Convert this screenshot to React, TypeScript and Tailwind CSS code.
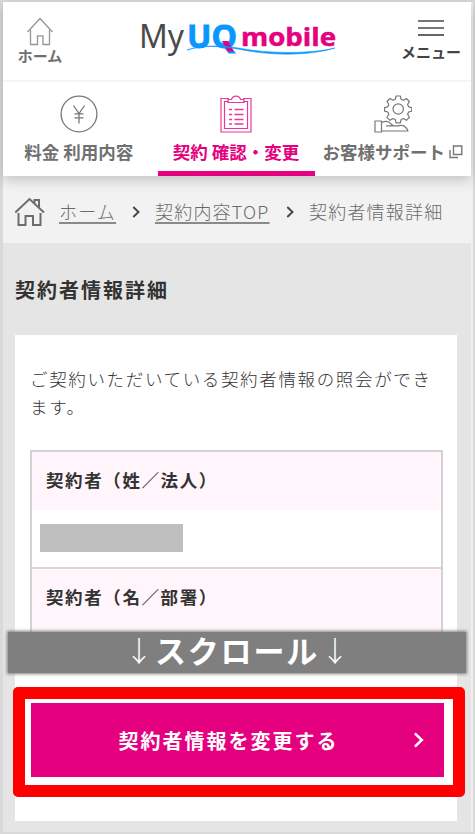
import React from "react";

function HomeIcon() {
  return (
    <svg width="28" height="29" viewBox="0 0 28 29" fill="none" stroke="#969696" strokeWidth="1.3">
      <path d="M1.5 15 L14 1.5 L26.500 15" />
      <path d="M4.500 12.500 V27.500 H11.500 V18.800 H17 V27.500 H23.500 V12.500" />
    </svg>
  );
}

function Logo() {
  return (
    <svg width="200" height="60" viewBox="0 -12 200 60" className="block">
      <text x="-1" y="29" fontFamily="'Noto Sans', sans-serif" fontSize="32" fill="#4a4a4a" textLength="45" lengthAdjust="spacingAndGlyphs">My</text>
      <text x="47" y="28.5" fontFamily="'Noto Sans', sans-serif" fontWeight="700" fontSize="32" fill="#0a96ff" stroke="#0a96ff" strokeWidth=".8" textLength="50" lengthAdjust="spacingAndGlyphs">UQ</text>
      <path d="M82 22 H88 L94 32.500 H88 Z" fill="#e4007f" />
      <path d="M47 31 C62 26 80 27 98 30 C130 37 170 37 195 29 C170 35 130 35 98 29 C80 26 62 26 47 31 Z" fill="#0a96ff" stroke="#0a96ff" strokeWidth=".6" />
      <text x="101" y="27" fontFamily="'Open Sans', sans-serif" fontWeight="700" fontSize="25" fill="#e4007f" stroke="#e4007f" strokeWidth=".5" textLength="95" lengthAdjust="spacingAndGlyphs">mobile</text>
    </svg>
  );
}

function YenIcon() {
  return (
    <svg width="38" height="38" viewBox="0 0 38 38" fill="none" stroke="#777" strokeWidth="1.3">
      <circle cx="19" cy="19" r="17.900" />
      <path d="M13.500 10.500 L19 18.500 L24.500 10.500 M19 18.500 V28.500 M14.500 18.800 H23.500 M14.500 22.800 H23.500" />
    </svg>
  );
}

function ClipboardIcon() {
  return (
    <svg width="32" height="38" viewBox="0 0 32 38" fill="none" stroke="#e83a9a" strokeWidth="1.2">
      <path d="M9 3.500 H1 V37 H31 V3.500 H23" />
      <path d="M9 6.500 H4.500 V33.500 H27.500 V6.500 H23" />
      <path d="M8 7.500 V4.500 H11.500 C12.500 0 19.500 0 20.500 4.500 H24 V7.500 Z" />
      <path d="M9 14.500 h3 M14.500 14.500 h9 M9 19.500 h3 M14.500 19.500 h9 M9 24.500 h3 M14.500 24.500 h9 M9 29 h3 M14.500 29 h9" strokeWidth="1.300" />
    </svg>
  );
}

function SupportIcon() {
  return (
    <svg width="38" height="38" viewBox="0 0 38 38" fill="none" stroke="#777" strokeWidth="1.200" strokeLinejoin="round">
      <path d="M22.100 1 h4.200 l.8 3.300 2.300 1 3-1.800 3 3-1.800 3 1 2.300 3.200.8 v3.600 l-3.200.8-1 2.300 1.800 3-3 3-3-1.800-2.300 1-.8 3.300 h-4.200 l-.8-3.300-2.300-1-3 1.800-3-3 1.800-3-1-2.300-3.200-.8 v-3.600 l3.200-.8 1-2.300-1.800-3 3-3 3 1.800 2.300-1 Z" />
      <circle cx="24.200" cy="14" r="5.200" />
      <path d="M1 26 H7.500 V37 H1 Z M7.500 27.500 C12 25.500 15 26 17 29 L19 30.500 M12 30.800 H24 C29 29.500 32 31 34 36 H7.500" />
    </svg>
  );
}

function ExternalIcon() {
  return (
    <svg width="14" height="14" viewBox="0 0 14 14" fill="none" stroke="#777" strokeWidth="1.400">
      <path d="M4.500 1 H12.800 V9.500 H4.500 Z M1 5 V12.500 H9" />
    </svg>
  );
}

function BreadcrumbHome() {
  return (
    <svg width="32" height="30" viewBox="0 0 32 30" fill="none" stroke="#6c6c6c" strokeWidth="2">
      <path d="M1.300 15.500 L15.500 2 L30 15.500 M20.500 6.500 V3 H25 V10.500" />
      <path d="M4.500 16 V28 H11.500 V19 H19 V28 H26.500 V16" />
    </svg>
  );
}

function Chevron({ className }: { className: string }) {
  return (
    <svg className={className} viewBox="0 0 8 12" fill="none" stroke="currentColor" strokeWidth="1.900">
      <path d="M1.300 1 L6.500 6 L1.300 11" />
    </svg>
  );
}

export default function App() {
  return (
    <div className="relative flex h-[834px] w-[475px] bg-[#d9d9d9] pt-[2px] pb-[2px] pl-[3px] pr-[2px] font-['Noto_Sans_CJK_JP',sans-serif] text-[#333] whitespace-nowrap">
      <div className="flex w-[470px] flex-col border-r-2 border-[#f0f0f0] bg-[#e5e5e5]">
        <header className="relative z-10 flex h-[174px] shrink-0 flex-col bg-white shadow-[0_4px_12px_rgba(0,0,0,0.2)]">
          <div className="flex h-[80px] border-b-2 border-[#f5f5f5]">
            <div className="flex w-[74px] flex-col items-center pt-[15px]">
              <HomeIcon />
              <span className="-mt-px text-[15px] leading-[22px] font-bold text-[#707070]">ホーム</span>
            </div>
            <div className="ml-[63px] w-[200px] pt-[5px]">
              <Logo />
            </div>
            <div className="ml-[59px] flex w-[64px] flex-col items-center pt-[18px]">
              <div className="flex w-[26px] flex-col gap-[5px]">
                <i className="h-[2px] bg-[#777]" />
                <i className="h-[2px] bg-[#777]" />
                <i className="h-[2px] bg-[#666]" />
              </div>
              <span className="mt-[5px] text-[15px] leading-[22px] font-bold text-[#444]">メニュー</span>
            </div>
          </div>
          <nav className="flex h-[94px] text-[17.5px] leading-[24px] font-bold text-[#707070]">
            <div className="flex w-[154.500px] flex-col items-center pt-[13px] pr-[3px]">
              <YenIcon />
              <span className="mt-[7px]">料金 利用内容</span>
            </div>
            <div className="flex w-[157px] flex-col items-center border-b-[5px] border-[#e4007f] pt-[13px] text-[#e4007f]">
              <ClipboardIcon />
              <span className="mt-[7px]">契約 確認・変更</span>
            </div>
            <div className="flex grow flex-col items-center pt-[13px]">
              <SupportIcon />
              <span className="mt-[7px] flex items-center gap-[4px]">
                お客様サポート
                <ExternalIcon />
              </span>
            </div>
          </nav>
        </header>
        <div className="flex h-[67px] shrink-0 items-center bg-[#f2f2f2] pl-[11px] pt-[4px] text-[18px] leading-[26px] tracking-[1.200px] font-light text-[#6a6a6a]">
          <BreadcrumbHome />
          <span className="-mt-[2px] ml-[13px] w-[57px] underline decoration-[#8a8a8a] decoration-[1.500px] underline-offset-[3px]">ホーム</span>
          <Chevron className="ml-[16px] h-[12px] w-[8px] text-[#444]" />
          <span className="-mt-[2px] ml-[15px] w-[116px] underline decoration-[#8a8a8a] decoration-[1.500px] underline-offset-[3px]">契約内容TOP</span>
          <Chevron className="ml-[15px] h-[12px] w-[8px] text-[#444]" />
          <span className="-mt-[2px] ml-[15px]">契約者情報詳細</span>
        </div>
        <main className="flex grow flex-col pl-[12px]">
          <h1 className="mt-[32px] text-[20px] leading-[30px] tracking-[2px] font-bold">契約者情報詳細</h1>
          <section className="mt-[30px] flex h-[486px] w-[442px] flex-col bg-white px-[15px] pt-[30px]">
            <p className="text-[17.5px] leading-[28px] tracking-[1.650px] font-light text-[#333]">
              ご契約いただいている契約者情報の照会ができ
              <br />
              ます。
            </p>
            <div className="mt-[29px] flex h-[186px] w-[413px] flex-col overflow-hidden border-x-2 border-t-2 border-[#d5d2d5] text-[17.5px] tracking-[1.600px] font-bold">
              <div className="flex h-[58px] shrink-0 items-center bg-[#fff5fb] pl-[14px] pb-[2px]">契約者（姓／法人）</div>
              <div className="flex h-[59px] shrink-0 items-center border-b-2 border-[#d9d6d9] pb-px pl-[8px]">
                <div className="h-[28px] w-[143px] bg-[#bfbfbf]" />
              </div>
              <div className="flex h-[62px] shrink-0 items-center bg-[#fff5fb] pl-[14px] pb-[5px]">契約者（名／部署）</div>
            </div>
          </section>
        </main>
      </div>

      <div className="absolute top-[632px] left-[8px] flex h-[41px] w-[458px] items-center justify-center bg-[#7f7f7f] pb-[6px] text-[31px] leading-[40px] font-bold text-white shadow-[0_0_3px_1px_#7f7f7f]">
        <span className="w-[28px] text-center text-[28px] font-light">↓</span>
        <span className="w-[168px] pt-[1px] text-center tracking-[1.800px]">スクロール</span>
        <span className="w-[28px] text-center text-[28px] font-light">↓</span>
      </div>

      <div className="absolute top-[687px] left-[13px] flex h-[110px] w-[452px] rounded-[5px] border-[12px] border-[#ff0000] bg-white pt-[4px] pl-[5.500px]">
        <button className="flex h-[74px] w-[413px] items-center bg-[#e4007f] pl-[88px] text-[20px] tracking-[2px] font-bold text-white">
          <span className="w-[220px] pt-px">契約者情報を変更する</span>
          <Chevron className="ml-[74px] h-[16px] w-[11px]" />
        </button>
      </div>
    </div>
  );
}
